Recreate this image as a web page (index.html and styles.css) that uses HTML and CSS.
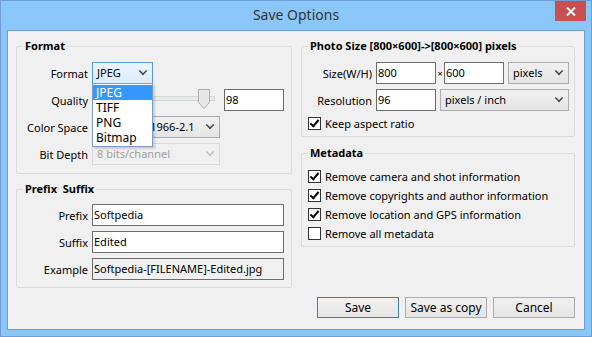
FILE: index.html
```html
<!DOCTYPE html>
<html lang="en">
  <head>
    <meta charset="UTF-8" />
    <title>Save Options</title>
    <link rel="stylesheet" href="styles.css">
  </head>
  <body>
    <div class="window">
      <div class="titlebar">
        <span></span>
        <span class="title">Save Options</span>
        <button class="close-btn">
          <svg width="10" height="9" viewBox="0 0 10 9"><path d="M1 0.5 L9 8.5 M9 0.5 L1 8.5" stroke="#fff" stroke-width="2"/></svg>
        </button>
      </div>
      <div class="client">
        <div class="columns">
          <div class="col">
            <fieldset class="group format-group">
              <legend>Format</legend>
              <div class="form">
                <label>Format</label>
                <div class="combo-wrap">
                  <div class="combo focus w-format">JPEG<span class="arrow"></span></div>
                  <ul class="droplist">
                    <li class="selected">JPEG</li>
                    <li>TIFF</li>
                    <li>PNG</li>
                    <li>Bitmap</li>
                  </ul>
                </div>
                <label>Quality</label>
                <div class="quality">
                  <div class="slider">
                    <div class="track"></div>
                    <svg class="thumb" width="12" height="20" viewBox="0 0 12 20"><path d="M0.5 0.5 H11.5 V13.5 L6 19.5 L0.5 13.5 Z" fill="#e6e6e6" stroke="#acacac"/></svg>
                  </div>
                  <div class="text w-small">98</div>
                </div>
                <label>Color Space</label>
                <div class="combo w-wide">sRGB IEC61966-2.1<span class="arrow"></span></div>
                <label>Bit Depth</label>
                <div class="combo disabled w-wide">8 bits/channel<span class="arrow"></span></div>
              </div>
            </fieldset>
            <fieldset class="group prefix-group">
              <legend>Prefix&nbsp; Suffix</legend>
              <div class="form">
                <label>Prefix</label>
                <div class="text w-long">Softpedia</div>
                <label>Suffix</label>
                <div class="text w-long">Edited</div>
                <label>Example</label>
                <div class="text readonly w-long">Softpedia-[FILENAME]-Edited.jpg</div>
              </div>
            </fieldset>
          </div>
          <div class="col">
            <fieldset class="group size-group">
              <legend>Photo Size [800×600]-&gt;[800×600] pixels</legend>
              <div class="form right">
                <label>Size(W/H)</label>
                <div class="size-row">
                  <div class="text w-small">800</div>
                  <span class="times">×</span>
                  <div class="text w-small">600</div>
                  <div class="combo w-unit">pixels<span class="arrow"></span></div>
                </div>
                <label>Resolution</label>
                <div class="size-row res-row">
                  <div class="text w-small">96</div>
                  <div class="combo w-res">pixels / inch<span class="arrow"></span></div>
                </div>
              </div>
              <div class="check-row"><span class="check on"></span>Keep aspect ratio</div>
            </fieldset>
            <fieldset class="group meta-group">
              <legend>Metadata</legend>
              <div class="check-row"><span class="check on"></span>Remove camera and shot information</div>
              <div class="check-row"><span class="check on"></span>Remove copyrights and author information</div>
              <div class="check-row"><span class="check on"></span>Remove location and GPS information</div>
              <div class="check-row"><span class="check"></span>Remove all metadata</div>
            </fieldset>
          </div>
        </div>
        <div class="buttons">
          <button class="btn default">Save</button>
          <button class="btn">Save as copy</button>
          <button class="btn">Cancel</button>
        </div>
      </div>
    </div>
  </body>
</html>
```

FILE: styles.css
```css
body {
  margin: 0;
  font-family: "Segoe UI", "Noto Sans", sans-serif;
  font-size: 11px;
  color: #000;
}
.window {
  width: 592px;
  height: 337px;
  box-sizing: border-box;
  border: 1px solid #6e9ed3;
  background: #8bc6f9;
  display: flex;
  flex-direction: column;
}
.titlebar {
  height: 29px;
  display: grid;
  grid-template-columns: 1fr auto 1fr;
  align-items: start;
}
.title {
  font-size: 14px;
  color: #333;
  line-height: 28px;
}
.close-btn {
  justify-self: end;
  width: 31px;
  height: 20px;
  margin-right: 5px;
  border: none;
  padding: 0;
  background: #c75050;
  display: flex;
  justify-content: center;
  align-items: center;
}
.client {
  flex: 1;
  margin: 0 6px 6px 6px;
  border: 1px solid #6e9ed3;
  background: #f0f0f0;
  padding: 7px 0 0 8px;
}
.columns {
  display: grid;
  grid-template-columns: 276px 274px;
  column-gap: 9px;
  align-items: start;
}
.group {
  margin: 0;
  padding: 0;
  border: 1px solid #dcdcdc;
  border-radius: 2px;
  min-width: 0;
}
.group legend {
  font-weight: bold;
  line-height: 16px;
  padding: 0 2px;
  margin-left: 6px;
}
.format-group {
  padding: 8px 0 8px 0;
}
.prefix-group {
  margin-top: 7px;
  padding: 7px 0 7px 0;
}
.size-group {
  padding: 8px 0 4px 0;
}
.meta-group {
  margin-top: 8px;
  padding: 6px 0 3px 0;
}
.form {
  display: grid;
  grid-template-columns: 71px auto;
  column-gap: 4px;
  row-gap: 5px;
  grid-auto-rows: 22px;
  align-items: center;
  justify-items: start;
}
.form.right {
  grid-template-columns: 70px auto;
}
.form label {
  justify-self: end;
  white-space: nowrap;
}
.text {
  box-sizing: border-box;
  height: 22px;
  border: 1px solid #6d6d6d;
  background: #fff;
  padding: 1px 1px 0;
  line-height: 17px;
  white-space: nowrap;
  overflow: hidden;
}
.text.readonly {
  background: #f0f0f0;
}
.w-small { width: 60px; }
.w-long { width: 192px; }
.combo {
  box-sizing: border-box;
  height: 22px;
  border: 1px solid #acacac;
  background: linear-gradient(#f0f0f0, #e5e5e5);
  padding: 0 4px;
  line-height: 20px;
  display: flex;
  justify-content: space-between;
  align-items: center;
  white-space: nowrap;
}
.combo.focus {
  border-color: #569de5;
  background: linear-gradient(#ecf4fc, #dcecfc);
}
.combo.disabled {
  border-color: #d9d9d9;
  background: #f0f0f0;
  color: #a0a0a0;
}
.arrow {
  width: 6px;
  height: 6px;
  border-right: 2px solid #444;
  border-bottom: 2px solid #444;
  transform: rotate(45deg) scale(0.75);
  margin: -4px 1px 0 0;
}
.combo.disabled .arrow {
  border-color: #c0c0c0;
}
.w-format { width: 61px; }
.w-wide { width: 128px; }
.w-unit { width: 61px; }
.w-res { width: 129px; }
.combo-wrap {
  position: relative;
  z-index: 2;
}
.droplist {
  position: absolute;
  left: 0;
  top: 21px;
  width: 61px;
  box-sizing: border-box;
  margin: 0;
  padding: 1px 0;
  list-style: none;
  background: #fff;
  border: 1px solid #7a9cc6;
  box-shadow: 2px 2px 2px rgba(0, 0, 0, 0.15);
}
.droplist li {
  height: 15px;
  line-height: 15px;
  padding-left: 3px;
  font-size: 12px;
}
.droplist li.selected {
  background: #3399ff;
  color: #fff;
}
.quality {
  display: flex;
  align-items: center;
  gap: 5px;
}
.slider {
  position: relative;
  width: 127px;
  height: 22px;
}
.track {
  position: absolute;
  left: 2px;
  right: 4px;
  top: 7px;
  height: 3px;
  border: 1px solid #d6d6d6;
  background: #e7eaea;
}
.thumb {
  position: absolute;
  left: 106px;
  top: 0;
}
.size-row {
  display: flex;
  align-items: center;
}
.times {
  width: 8px;
  text-align: center;
  font-size: 9px;
}
.size-row .w-unit {
  margin-left: 4px;
}
.res-row .w-res {
  margin-left: 4px;
}
.check-row {
  display: flex;
  align-items: center;
  height: 19px;
  padding-left: 6px;
  white-space: nowrap;
}
.size-group .check-row {
  margin-top: 3px;
  height: 18px;
}
.check {
  width: 13px;
  height: 13px;
  box-sizing: border-box;
  border: 1px solid #333;
  background: #fff;
  margin-right: 4px;
  position: relative;
}
.check.on::after {
  content: "";
  position: absolute;
  left: 3px;
  top: 0px;
  width: 3px;
  height: 7px;
  border-right: 2px solid #000;
  border-bottom: 2px solid #000;
  transform: rotate(40deg);
}
.buttons {
  display: flex;
  justify-content: flex-end;
  gap: 6px;
  margin: 9px 9px 0 0;
}
.btn {
  width: 82px;
  height: 21px;
  padding: 0;
  border: 1px solid #acacac;
  background: linear-gradient(#f0f0f0, #e5e5e5);
  font-family: inherit;
  font-size: 12px;
  color: #000;
}
.btn.default {
  border-color: #3c7fb1;
}
```
